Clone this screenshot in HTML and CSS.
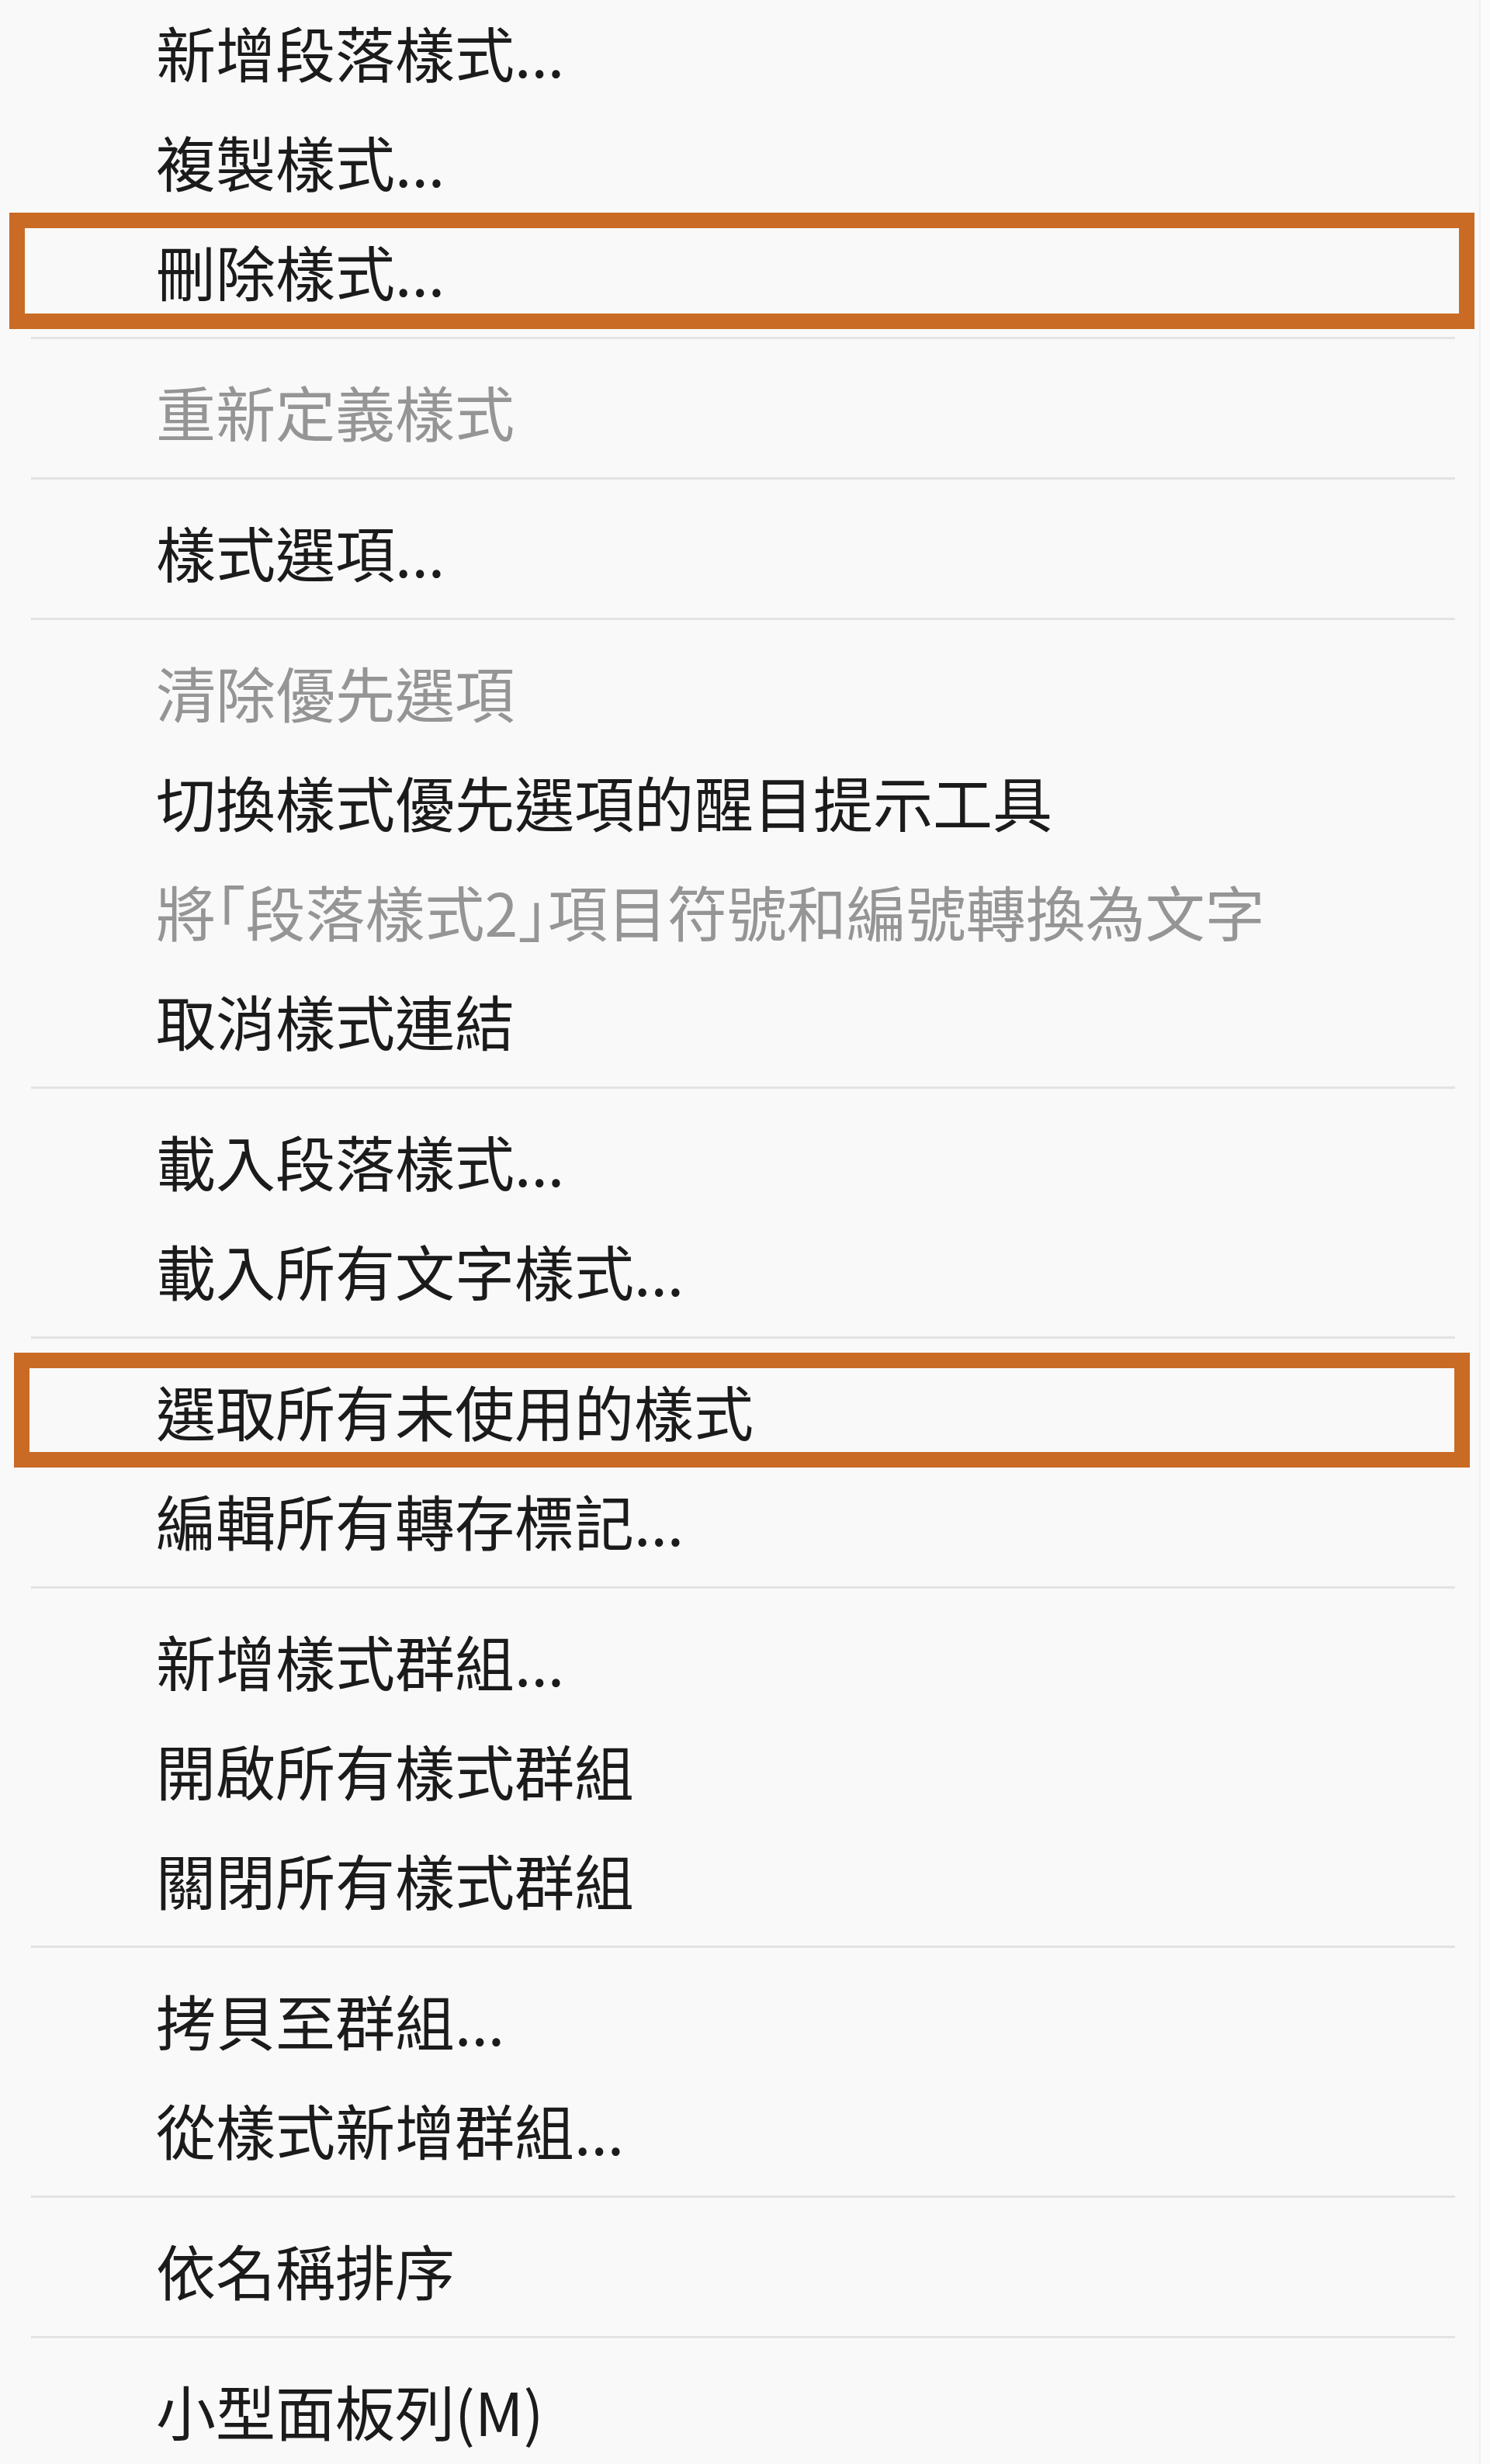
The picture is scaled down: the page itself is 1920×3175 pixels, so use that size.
FILE: index.html
```html
<!DOCTYPE html>
<html lang="zh-Hant">

<head>
    <meta charset="UTF-8">
    <meta name="viewport" content="width=device-width, initial-scale=1.0">
    <title>段落樣式選單</title>
    <link rel="stylesheet" href="styles.css">
</head>

<body>
    <div class="menu">
        <!-- 新增 / 複製 / 刪除 -->
        <div class="group first">
            <div class="item">新增段落樣式...</div>
            <div class="item">複製樣式...</div>
            <div class="item marked mark-delete">刪除樣式...<span class="mark"></span></div>
        </div>
        <div class="sep"></div>

        <div class="group">
            <div class="item disabled">重新定義樣式</div>
        </div>
        <div class="sep"></div>

        <div class="group">
            <div class="item">樣式選項...</div>
        </div>
        <div class="sep"></div>

        <div class="group">
            <div class="item disabled">清除優先選項</div>
            <div class="item">切換樣式優先選項的醒目提示工具</div>
            <div class="item disabled">將<span class="br">「</span>段落樣式2<span class="br">」</span>項目符號和編號轉換為文字</div>
            <div class="item">取消樣式連結</div>
        </div>
        <div class="sep"></div>

        <div class="group">
            <div class="item">載入段落樣式...</div>
            <div class="item">載入所有文字樣式...</div>
        </div>
        <div class="sep"></div>

        <div class="group">
            <div class="item marked mark-unused">選取所有未使用的樣式<span class="mark"></span></div>
            <div class="item">編輯所有轉存標記...</div>
        </div>
        <div class="sep"></div>

        <!-- 樣式群組 -->
        <div class="group">
            <div class="item">新增樣式群組...</div>
            <div class="item">開啟所有樣式群組</div>
            <div class="item">關閉所有樣式群組</div>
        </div>
        <div class="sep"></div>

        <div class="group">
            <div class="item">拷貝至群組...</div>
            <div class="item">從樣式新增群組...</div>
        </div>
        <div class="sep"></div>

        <div class="group">
            <div class="item">依名稱排序</div>
        </div>
        <div class="sep"></div>

        <div class="group">
            <div class="item">小型面板列(M)</div>
        </div>
    </div>
</body>

</html>
```

FILE: styles.css
```css
body {
    margin: 0;
    background-color: #fbfbfb;
    font-family: "Noto Sans CJK TC", "Noto Sans CJK JP", sans-serif;
}

.menu {
    width: 1906px;
    height: 3175px;
    overflow: hidden;
    background-color: #f9f9f9;
    border-right: 2px solid #efefef;
}

.group {
    padding: 22px 0 15px 0;
}

.group.first {
    padding-top: 0;
    margin-top: -4px;
}

.item {
    position: relative;
    height: 141px;
    line-height: 141px;
    padding-left: 201px;
    font-size: 77px;
    color: #1b1b1b;
    white-space: nowrap;
}

.item.disabled {
    color: #959595;
}

.item .br {
    font-feature-settings: "halt";
}

.sep {
    height: 3px;
    margin: 0 31px 0 40px;
    background-color: #e3e3e3;
}

/* 橘色標示框 */
.mark {
    position: absolute;
    border: 20px solid #c96b25;
    box-sizing: border-box;
}

.mark-delete .mark {
    top: -4px;
    left: 12px;
    width: 1888px;
    height: 150px;
}

.mark-unused .mark {
    top: -4px;
    left: 18px;
    width: 1876px;
    height: 148px;
}
```
